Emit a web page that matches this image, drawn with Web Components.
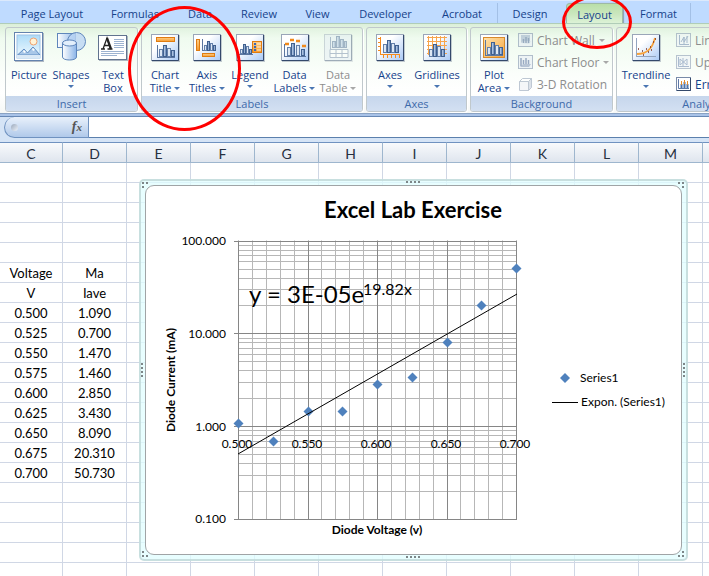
<!DOCTYPE html>
<html lang="en">
<head>
<meta charset="utf-8">
<title>Excel Lab Exercise</title>
<style>
html, body { height: 100%; margin: 0; }
body { overflow: hidden; font-family: "Open Sans", "Noto Sans", sans-serif; font-size: 11px; color: #15428b; background: #fff; }
</style>
</head>
<body>
<excel-window></excel-window>

<script>
const define = (name, html, setup) => {
  const tpl = document.createElement('template');
  tpl.innerHTML = html;
  customElements.define(name, class extends HTMLElement {
    constructor() {
      super();
      this.attachShadow({ mode: 'open' });
    }
    connectedCallback() {
      if (this.shadowRoot.childNodes.length) return;
      this.shadowRoot.append(tpl.content.cloneNode(true));
      if (setup) setup(this, this.shadowRoot);
    }
  });
};

/* ---------- icons ---------- */
const defs = `<defs>
 <linearGradient id="p" x1="0" y1="0" x2="1" y2="1"><stop offset=".35" stop-color="#fff"/><stop offset="1" stop-color="#a9c9f5"/></linearGradient>
 <linearGradient id="b" x1="0" x2="1"><stop offset="0" stop-color="#dbe8f8"/><stop offset="1" stop-color="#4c72ab"/></linearGradient>
 <linearGradient id="o" x1="0" y1="0" x2="0" y2="1"><stop offset="0" stop-color="#ffd08a"/><stop offset="1" stop-color="#f59a2d"/></linearGradient>
 <linearGradient id="oa" x1="0" y1="0" x2="1" y2="1"><stop offset="0" stop-color="#ffe3ad"/><stop offset="1" stop-color="#f7a640"/></linearGradient>
 <linearGradient id="s" x1="0" y1="0" x2="0" y2="1"><stop offset="0" stop-color="#aedcf8"/><stop offset="1" stop-color="#f3fbff"/></linearGradient>
 <linearGradient id="c" x1="0" x2="1"><stop offset="0" stop-color="#fff"/><stop offset="1" stop-color="#8ab4e8"/></linearGradient>
</defs>`;
const frame = (fill = 'url(#p)') => `<rect x="2" y="3" width="28" height="27" fill="#8b97a8" opacity=".5"/>
 <rect x="1.500" y="2.500" width="27" height="26" fill="${fill}" stroke="#9aa6b8"/>
 <path d="M28.500 3v25.500H2" fill="none" stroke="#34496b"/>`;
const bar = (x, y, h, w = 4) => `<rect x="${x + .5}" y="${y + .5}" width="${w - 1}" height="${h - 1}" fill="url(#b)" stroke="#40608f"/>`;
const pale = (x, y, h, w = 4) => `<rect x="${x + .5}" y="${y + .5}" width="${w - 1}" height="${h - 1}" fill="#dde7f4" stroke="#6480aa"/>`;
const or = (x, y, w, h) => `<rect x="${x + .5}" y="${y + .5}" width="${w - 1}" height="${h - 1}" fill="url(#o)" stroke="#e07c10"/>`;
const icons = {
  picture: `<rect x="1" y="1" width="29" height="29" fill="#7e8ba0" opacity=".6"/><rect x=".5" y=".5" width="28" height="28" fill="#fff" stroke="#6483ae"/>
   <rect x="3" y="3" width="23" height="23" fill="url(#s)" stroke="#9dc3e6" stroke-width="1"/>
   <circle cx="19.500" cy="9.500" r="3.500" fill="#fff4d8" stroke="#f0a070"/>
   <path d="M3.500 23l6.500-6 3.500 4 5.500-6 7 8z" fill="#a9c7e8" stroke="#5f8cc2"/><path d="M9 19l1-1 2 2-2 1zM18 17l1-1 2 2-2 1z" fill="#fff"/><path d="M3 23h23v3H3z" fill="#d9e8f6"/>`,
  shapes: `<rect x="1.500" y="1.500" width="18" height="14" fill="url(#c)" stroke="#5f86bb"/>
   <circle cx="20.500" cy="9.500" r="9" fill="#bdd6f4" fill-opacity=".8" stroke="#5f86bb"/>
   <path d="M6.500 11v14c0 4 14 4 14 0V11z" fill="url(#c)" stroke="#5f86bb"/><ellipse cx="13.500" cy="11" rx="7" ry="3" fill="#e3effc" stroke="#5f86bb"/>`,
  textbox: `<rect x="1" y="4" width="29" height="25" fill="#7e8ba0" opacity=".6"/><rect x=".5" y="3.500" width="28" height="24" fill="#fff" stroke="#61738f"/>
   <path d="M16 7.500h10M16 9.500h10M16 11.500h10M16 13.500h10M16 15.500h10M3 19.500h23M3 21.500h23M3 23.500h16" stroke="#9db3d1"/>
   <path d="M3 17h4M9.500 17h5M5 17l4-11 3.500 11M6.500 13.500h4.500" fill="none" stroke="#222" stroke-width="1.300"/><path d="M9 6l4 11" stroke="#222" stroke-width="2.200"/>`,
  title: frame() + or(6, 5, 19, 5) + `<path d="M7.500 13v13M7 25.500h18" stroke="#5b76a0"/>` + pale(9, 17, 8) + bar(13, 13, 12) + pale(17, 16, 9) + bar(21, 18, 7),
  axistitles: frame() + or(4, 7, 4, 12) + or(10, 21, 13, 4) + `<path d="M10.500 7v12M10 18.500h13" stroke="#5b76a0"/>` + pale(12, 13, 6, 3) + bar(15, 9, 10, 3) + pale(18, 11, 8, 3) + bar(21, 13, 6, 3),
  legend: frame() + or(17, 9, 10, 12) + `<path d="M19 12h2M19 15h2M19 18h2" stroke="#3967b5" stroke-width="2"/><path d="M22 12h4M22 15h4M22 18h4" stroke="#fff2d8"/>
   <path d="M3 22.500h15" stroke="#5b76a0"/>` + pale(5, 17, 5, 3) + bar(8, 12, 10, 3) + pale(11, 14, 8, 3) + bar(14, 17, 5, 3),
  labels: frame() + `<path d="M4.500 12v13M4 24.500h22" stroke="#5b76a0"/>` + pale(7, 15, 9) + bar(11, 11, 13) + pale(16, 13, 11) + bar(21, 17, 7) +
   `<path d="M5 12h4M10 8h4M16 9h4M22 14h4" stroke="#f08a1d" stroke-width="2.400"/>`,
  table: `<g opacity=".45">` + frame('#e3eaf4') + `<path d="M7.500 5v12" stroke="#5b76a0"/>` + bar(9, 9, 7) + bar(13, 4, 12) + bar(17, 7, 9) + bar(21, 9, 7, 3) +
   `<path d="M7 17.500h18v8H7zM7 21.500h18M13 17v8M19 17v8" fill="#fff" stroke="#667c9f"/></g>`,
  axes: frame() + `<path d="M5.500 5v18M3 6.500h3M3 10.500h3M3 14.500h3M3 18.500h3M5 22.500h20M8.500 22v4M12.500 22v4M16.500 22v4M20.500 22v4M24.500 22v4" stroke="#f58a1c" fill="none"/>` + pale(8, 12, 9) + bar(12, 8, 13) + pale(16, 11, 10) + bar(20, 13, 8),
  gridlines: frame() + `<path d="M6.500 4v19M10.500 4v19M14.500 4v19M18.500 4v19M22.500 4v19M5 5.500h20M5 9.500h20M5 13.500h20M5 17.500h20M5 21.500h20" stroke="#f7a54c"/>` + pale(7, 17, 8) + bar(11, 12, 13) + pale(15, 14, 11) + bar(19, 17, 8),
  plotarea: frame() + `<rect x="4.500" y="5.500" width="21" height="20" fill="url(#oa)" stroke="#d88a2b"/><path d="M6.500 8v16M6 23.500h18" stroke="#5b76a0"/>` + pale(8, 15, 8) + bar(12, 10, 13) + pale(16, 13, 10) + bar(20, 15, 8),
  trend: frame() + `<path d="M5.500 6v18M5 24.500h20" stroke="#93a5c0"/><path d="M6 22c9 0 15-4 18-16" fill="none" stroke="#f7a23a" stroke-width="1.800"/>
   <path d="M7 17h1M11 19h1M15 17h1M19 15h1M17 20h1M22 10h1M24 7h1M12 23h1M20 18h1" stroke="#7b3323" stroke-width="1.300"/>`,
  wall: `<g opacity=".55"><rect x=".5" y=".5" width="14" height="13" fill="#e6ecf5" stroke="#788aa8"/><path d="M3 2h9v8H3z" fill="#9aacc8"/><path d="M3 10l2-2h8l-2 3z" fill="#c9d4e5"/><path d="M5.500 6v4M8 4v6M10.500 5v5" stroke="#4c6796" stroke-width="1.500"/></g>`,
  floor: `<g opacity=".55"><rect x=".5" y=".5" width="14" height="13" fill="#e6ecf5" stroke="#788aa8"/><path d="M2 12l3-3h8l-2 3z" fill="#8196b9"/><path d="M5.500 5v4M8 3v6M10.500 5v4M3 3v8" stroke="#4c6796" stroke-width="1.500"/></g>`,
  rotate: `<g opacity=".6" stroke="#95a3b8"><path d="M1.500 4.500h9v9h-9z" fill="#eef1f5"/><path d="M1.500 4.500l3-3h9l-3 3z" fill="#fff"/><path d="M10.500 4.500l3-3v9l-3 3z" fill="#c5cedb"/></g>`,
  lines: `<g opacity=".5"><rect x=".5" y=".5" width="14" height="13" fill="#eef2f8" stroke="#788aa8"/><path d="M3.500 2v9.500H13M5 9l3-5v5l4-6M8 4v7M11 3v7" fill="none" stroke="#5f7aa8"/></g>`,
  updown: `<g opacity=".5"><rect x=".5" y=".5" width="14" height="13" fill="#eef2f8" stroke="#788aa8"/><path d="M2.500 2v9.500H13M4 4l7 6V4l-7 6zM7 3v8" fill="none" stroke="#5f7aa8"/></g>`,
  error: `<rect x=".5" y=".5" width="14" height="13" fill="#fff" stroke="#788aa8"/><path d="M14.500 1v12.500H1" fill="none" stroke="#34496b"/><path d="M2.500 2v9.500H13" fill="none" stroke="#5f7aa8"/><path d="M5.500 7v4M8.500 5v6M11.500 7v4" stroke="#4c72ab" stroke-width="2"/><path d="M5.500 4v4M8.500 3v4M11.500 4v4" stroke="#e58a2b"/>`
};

/* ---------- ribbon ---------- */
define('ribbon-tab', `<style>
 :host { display: block; flex: none; width: var(--w); }
 :host([divided]) { border-right: 1px solid #a3c0e6; box-sizing: border-box; }
 :host([active]) { margin: 0 4px; }
 button { all: unset; box-sizing: border-box; display: block; width: 100%; height: 22px; line-height: 22px; text-align: center; color: #15428b; white-space: nowrap; }
 :host([active]) button { background: linear-gradient(#b9dfa8, #cbe7bf 50%, #e0f5dc); border: 1px solid #9db9a5; border-bottom: 0; border-radius: 4px 4px 0 0; line-height: 20px; box-shadow: 1px 0 1px #8b9db3; }
</style><button type="button" role="tab"><slot></slot></button>`, (el, root) =>
  root.querySelector('button').setAttribute('aria-selected', el.hasAttribute('active')));

define('ribbon-group', `<style>
 :host { display: flex; flex: none; flex-direction: column; box-sizing: border-box; width: var(--group-w); height: 85px; border: 1px solid #c0c8cc; border-radius: 3px; overflow: hidden; box-shadow: 1px 1px 0 #fff; }
 .items { flex: 1; min-height: 0; display: flex; padding: 4px 2px 0; }
 .name { flex: none; height: 15px; line-height: 15px; text-align: center; color: #3e6aaa; background: linear-gradient(#c6d6ec, #d3e0f2); }
</style><div class="items"><slot></slot></div><div class="name"></div>`, (el, root) =>
  root.querySelector('.name').textContent = el.getAttribute('name'));

define('ribbon-button', `<style>
 :host { display: block; flex: none; width: var(--w, 42px); }
 button { all: unset; display: block; width: 100%; text-align: center; line-height: 13px; white-space: nowrap; color: #15428b; }
 button:disabled { color: #8d8d8d; --arrow: #a8a8a8; }
 svg { display: block; width: 30px; height: 31px; margin: 0 auto 5px; }
 i { display: none; border: 3px solid transparent; border-top-color: var(--arrow, #4a76b2); border-bottom: 0; margin: 0 0 2px 3px; }
 :host([menu]) i { display: inline-block; }
 :host([menu="below"]) i { display: block; width: 0; margin: 4px auto 0; }
</style><button type="button"><svg viewBox="0 0 30 31" aria-hidden="true"></svg><slot></slot><i></i></button>`, (el, root) => {
  root.querySelector('svg').innerHTML = defs + icons[el.getAttribute('icon')];
  root.querySelector('button').disabled = el.hasAttribute('disabled');
});

define('ribbon-row', `<style>
 :host { display: block; }
 button { all: unset; display: flex; align-items: center; gap: 4px; height: 22px; white-space: nowrap; color: #15428b; }
 button:disabled { color: #8d8d8d; }
 svg { width: 15px; height: 14px; flex: none; }
 i { display: none; border: 3px solid transparent; border-top-color: #a8a8a8; border-bottom: 0; }
 :host([menu]) i { display: block; }
</style><button type="button"><svg viewBox="0 0 15 14" aria-hidden="true"></svg><span><slot></slot></span><i></i></button>`, (el, root) => {
  root.querySelector('svg').innerHTML = defs + icons[el.getAttribute('icon')];
  root.querySelector('button').disabled = el.hasAttribute('disabled');
});

define('ribbon-bar', `<style>
 :host { display: block; flex: none; }
 .tabs { display: flex; height: 24px; box-sizing: border-box; padding: 2px 0 0 7px; background: #bfdbff; border-top: 1px solid #dbe9fc; border-bottom: 1px solid #b0cdb8; overflow: hidden; }
 .groups { display: flex; gap: 3px; height: 89px; box-sizing: border-box; padding: 3px 0 0 5px; overflow: hidden; background: linear-gradient(#dcefd9, #effbef 14px, #fbfefb 50px, #fff 70px, #f6f8f6); }
 .rows { margin: -3px 0 0 3px; font-size: 12px; }
 .edge { height: 4px; box-sizing: border-box; background: #a9c3e8; border-top: 1px solid #8aa3c4; border-bottom: 1px solid #6788b5; }
</style>
<div class="tabs" role="tablist">
 <ribbon-tab style="--w:90px">Page Layout</ribbon-tab><ribbon-tab style="--w:76px">Formulas</ribbon-tab><ribbon-tab style="--w:54px">Data</ribbon-tab><ribbon-tab style="--w:64px">Review</ribbon-tab><ribbon-tab style="--w:53px">View</ribbon-tab><ribbon-tab style="--w:83px">Developer</ribbon-tab><ribbon-tab divided style="--w:71px">Acrobat</ribbon-tab><ribbon-tab style="--w:64px">Design</ribbon-tab><ribbon-tab active style="--w:57px">Layout</ribbon-tab><ribbon-tab divided style="--w:64px">Format</ribbon-tab>
</div>
<div class="groups">
 <ribbon-group name="Insert" style="--group-w:133px">
  <ribbon-button icon="picture">Picture</ribbon-button><ribbon-button icon="shapes" menu="below">Shapes</ribbon-button><ribbon-button icon="textbox">Text<br>Box</ribbon-button>
 </ribbon-group>
 <ribbon-group name="Labels" style="--group-w:222px">
  <ribbon-button icon="title" menu>Chart<br>Title</ribbon-button><ribbon-button icon="axistitles" menu>Axis<br>Titles</ribbon-button><ribbon-button icon="legend" menu="below" style="--w:44px">Legend</ribbon-button><ribbon-button icon="labels" menu style="--w:45px">Data<br>Labels</ribbon-button><ribbon-button icon="table" menu disabled>Data<br>Table</ribbon-button>
 </ribbon-group>
 <ribbon-group name="Axes" style="--group-w:101px">
  <ribbon-button icon="axes" menu="below">Axes</ribbon-button><ribbon-button icon="gridlines" menu="below" style="--w:52px">Gridlines</ribbon-button>
 </ribbon-group>
 <ribbon-group name="Background" style="--group-w:143px">
  <ribbon-button icon="plotarea" menu>Plot<br>Area</ribbon-button>
  <div class="rows"><ribbon-row icon="wall" menu disabled>Chart Wall</ribbon-row><ribbon-row icon="floor" menu disabled>Chart Floor</ribbon-row><ribbon-row icon="rotate" disabled>3-D Rotation</ribbon-row></div>
 </ribbon-group>
 <ribbon-group name="Analysis" style="--group-w:174px">
  <ribbon-button icon="trend" menu="below" style="--w:54px">Trendline</ribbon-button>
  <div class="rows"><ribbon-row icon="lines" menu disabled>Lines</ribbon-row><ribbon-row icon="updown" menu disabled>Up/Down Bars</ribbon-row><ribbon-row icon="error">Error Bars</ribbon-row></div>
 </ribbon-group>
</div>
<div class="edge"></div>`);

define('formula-bar', `<style>
 :host { display: flex; flex: none; height: 25px; box-sizing: border-box; border-bottom: 4px solid #d5e4f6; background: #fff; }
 .name { flex: none; width: 89px; box-sizing: border-box; border-right: 1px solid #6f92c0; background: #d5e4f6; padding-left: 4px; }
 .pill { display: flex; align-items: center; justify-content: space-between; box-sizing: border-box; height: 21px; padding: 0 6px; border-left: 1px solid #6f92c0; border-bottom: 1px solid #6f92c0; border-radius: 11px 0 0 11px; background: linear-gradient(#e9f1fb, #b0c9ea); }
 .knob { width: 7px; height: 7px; border-radius: 50%; background: linear-gradient(135deg, #9aa8bb, #eef3fa); }
 button { all: unset; font: italic bold 14px/18px "Liberation Serif", serif; color: #555; }
 sub { font-size: 11px; line-height: 0; vertical-align: baseline; }
 input { all: unset; flex: 1; min-width: 0; background: #fff; border-bottom: 1px solid #5b80ad; }
</style><div class="name"><div class="pill"><span class="knob"></span><button type="button" aria-label="Insert function">f<sub>x</sub></button></div></div><input type="text" aria-label="Formula">`);

/* ---------- worksheet ---------- */
define('sheet-grid', `<style>
 :host { display: block; flex: 1; min-height: 0; position: relative; overflow: hidden; font: 13px/17px Lato, sans-serif; color: #000; }
 table { border-collapse: separate; border-spacing: 0; table-layout: fixed; width: 767px; }
 col { width: 64px; } col:first-child { width: 63px; }
 th, td { box-sizing: border-box; height: 20px; padding: 2px 0 0; text-align: center; border-right: 1px solid #d0d7e5; border-bottom: 1px solid #d0d7e5; }
 th { height: 21px; font-weight: 400; font-size: 14px; color: #27303f; background: linear-gradient(#f8fafc, #dfe5ee); border-color: #9eb6ce; border-top: 1px solid #6f92c0; }
</style><table><colgroup></colgroup><thead><tr></tr></thead><tbody></tbody></table><slot></slot>`, (el, root) => {
  const cols = [...'CDEFGHIJKLMN'];
  root.querySelector('colgroup').innerHTML = cols.map(() => '<col>').join('');
  root.querySelector('thead tr').innerHTML = cols.map(c => `<th scope="col">${c}</th>`).join('');
  const data = [[], [], [], [], [], ['Voltage', 'Ma'], ['V', 'Iave'], ['0.500', '1.090'], ['0.525', '0.700'], ['0.550', '1.470'], ['0.575', '1.460'], ['0.600', '2.850'], ['0.625', '3.430'], ['0.650', '8.090'], ['0.675', '20.310'], ['0.700', '50.730'], [], [], [], [], []];
  root.querySelector('tbody').innerHTML = data.map(r => '<tr>' + cols.map((c, i) => `<td>${r[i] || ''}</td>`).join('') + '</tr>').join('');
});

define('xy-chart', `<style>
 :host { position: absolute; left: 139px; top: 37px; width: 549px; height: 382px; box-sizing: border-box; border: 2px solid rgba(190, 212, 212, .75); border-radius: 5px; background: rgba(224, 253, 255, .75); padding: 4px; }
 .area { width: 100%; height: 100%; box-sizing: border-box; border: 1px solid #a0a4a6; border-radius: 9px; background: #fff; }
 svg { display: block; width: 100%; height: 100%; overflow: visible; }
 text { font-family: Lato, sans-serif; font-size: 12px; fill: #000; }
 .mid { text-anchor: middle; } .end { text-anchor: end; }
 .bold { font-weight: 700; }
</style><div class="area"><svg viewBox="146 186 535 368" role="img" aria-label="Excel Lab Exercise chart"></svg></div>`, (el, root) => {
  const X = v => 238 + (v - .5) * 1390, Y = v => 519 - 92.8 * (Math.log10(v) + 1);
  const px = n => Math.round(n) + .5;
  let minor = '', major = '';
  for (let i = 0; i <= 20; i++) {
    const d = `M${px(X(.5 + i / 100))} 240.500V519.500`;
    if (i % 5) minor += d; else major += d;
  }
  for (let e = -1; e <= 1; e++) for (let k = 2; k < 10; k++) minor += `M238 ${px(Y(k * 10 ** e))}H517`;
  for (let e = -1; e <= 2; e++) major += `M234 ${px(Y(10 ** e))}H517`;
  const diamond = (x, y) => `<path d="M${x} ${y - 5}l5 5-5 5-5-5z" fill="#4f81bd"/>`;
  const pts = [[.5, 1.09], [.525, .7], [.55, 1.47], [.575, 1.46], [.6, 2.85], [.625, 3.43], [.65, 8.09], [.675, 20.31], [.7, 50.73]];
  let s = `<path fill="none" d="${minor}" stroke="#b7b7b7"/><path fill="none" d="${major}" stroke="#868686"/>`;
  s += pts.map(([x, y]) => diamond(Math.round(X(x)) + .5, Math.round(Y(y)) + .5)).join('');
  s += `<path d="M238 454L517 294" stroke="#000" fill="none"/>`;
  s += [['100.000', 245], ['10.000', 338], ['1.000', 431], ['0.100', 523]].map(([t, y]) => `<text class="end" x="226" y="${y}">${t}</text>`).join('');
  s += ['0.500', '0.550', '0.600', '0.650', '0.700'].map((t, i) => `<text class="mid" x="${Math.round(237 + i * 69.5)}" y="448">${t}</text>`).join('');
  s += `<text class="mid bold" x="413" y="218" style="font-size:22px">Excel Lab Exercise</text>
   <text x="249" y="303" style="font-size:24px">y = 3E-05e</text><text x="363" y="295" style="font-size:16px">19.82x</text>
   <text class="mid bold" x="377" y="534">Diode Voltage (v)</text>
   <text class="mid bold" transform="translate(175 380) rotate(-90)">Diode Current (mA)</text>
   ${diamond(565, 378)}<text x="580" y="382">Series1</text>
   <path d="M552 402.500h26" stroke="#000"/><text x="581" y="406">Expon. (Series1)</text>`;
  const dot = (x, y) => `M${x} ${y}h2v2h-2z`;
  let d = '';
  for (let i = 0; i < 4; i++) d += dot(406 + i * 4, 181) + dot(406 + i * 4, 556) + dot(141, 363 + i * 4) + dot(683, 363 + i * 4);
  d += dot(142, 182) + dot(146, 182) + dot(142, 186) + dot(678, 182) + dot(682, 182) + dot(682, 186) + dot(142, 551) + dot(142, 555) + dot(146, 555) + dot(682, 551) + dot(678, 555) + dot(682, 555);
  s += `<path d="${d}" fill="#7d8688"/>`;
  root.querySelector('svg').innerHTML = s;
});

define('ink-ring', `<style>
 :host { position: absolute; box-sizing: border-box; border: 3px solid #f00; border-radius: 50%; pointer-events: none; }
</style>`);

define('excel-window', `<style>
 :host { display: flex; flex-direction: column; position: relative; height: 100%; overflow: hidden; }
 .titles { left: 128px; top: 6px; width: 113px; height: 125px; }
 .layout { left: 562px; top: -5px; width: 70px; height: 54px; }
</style>
<ribbon-bar></ribbon-bar>
<formula-bar></formula-bar>
<sheet-grid><xy-chart></xy-chart></sheet-grid>
<ink-ring class="titles"></ink-ring>
<ink-ring class="layout"></ink-ring>`);
</script>
</body>
</html>
